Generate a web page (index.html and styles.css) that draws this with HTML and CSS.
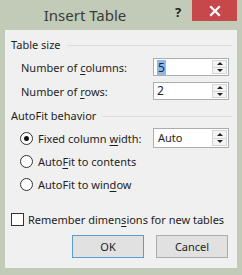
FILE: index.html
```html
<!DOCTYPE html>
<html>
<head>
<meta charset="utf-8">
<link rel="stylesheet" href="styles.css">
</head>
<body>
<div class="window">
  <div class="titlebar">
    <div class="title">Insert Table</div>
    <div class="help">?</div>
    <div class="close">
      <svg width="12" height="12" viewBox="0 0 12 12"><path d="M2 2 L10 10 M10 2 L2 10" stroke="#fff" stroke-width="2.2" stroke-linecap="square"/></svg>
    </div>
  </div>
  <div class="panel">
    <div class="group-head"><span>Table size</span><span class="rule"></span></div>
    <div class="field-row row1">
      <span class="label">Number of <u>c</u>olumns:</span>
      <div class="spin"><span class="val"><span class="sel">5</span></span><span class="arrows"><span class="up"></span><span class="dn"></span></span></div>
    </div>
    <div class="field-row row2">
      <span class="label">Number of <u>r</u>ows:</span>
      <div class="spin"><span class="val">2</span><span class="arrows"><span class="up"></span><span class="dn"></span></span></div>
    </div>
    <div class="group-head head2"><span>AutoFit behavior</span><span class="rule"></span></div>
    <div class="radio-row first">
      <span class="radio checked"></span>
      <span class="rlabel">Fixed column <u>w</u>idth:</span>
      <div class="spin auto"><span class="val">Auto</span><span class="arrows"><span class="up"></span><span class="dn"></span></span></div>
    </div>
    <div class="radio-row">
      <span class="radio"></span>
      <span class="rlabel">Auto<u>F</u>it to contents</span>
    </div>
    <div class="radio-row">
      <span class="radio"></span>
      <span class="rlabel">AutoFit to win<u>d</u>ow</span>
    </div>
    <div class="check-row">
      <span class="check"></span>
      <span class="clabel">Remember dimen<u>s</u>ions for new tables</span>
    </div>
    <div class="buttons">
      <div class="btn default">OK</div>
      <div class="btn">Cancel</div>
    </div>
  </div>
</div>
</body>
</html>
```
FILE: styles.css
```css
html, body { margin: 0; padding: 0; }
body {
  width: 242px;
  height: 275px;
  background: #c2cab8;
  font-family: "Noto Sans", "Open Sans", sans-serif;
  font-size: 11px;
  color: #1e1e1e;
  overflow: hidden;
  white-space: nowrap;
}
.window {
  width: 242px;
  height: 275px;
  display: flex;
  flex-direction: column;
}
.titlebar {
  height: 30px;
  display: flex;
  align-items: flex-start;
}
.title {
  width: 170px;
  text-align: center;
  font-size: 15px;
  line-height: 30px;
  color: #3a3a3a;
}
.help {
  width: 22px;
  text-align: left;
  font-size: 13px;
  font-weight: bold;
  line-height: 24px;
  color: #222;
  padding-left: 5px;
  box-sizing: border-box;
}
.close {
  width: 45px;
  height: 21px;
  background: #c7484a;
  display: flex;
  align-items: center;
  justify-content: center;
}
.close svg { display: block; }
.panel {
  margin: 0 5px;
  height: 238px;
  background: #f0f0f0;
  box-sizing: border-box;
  padding-top: 7px;
  display: flex;
  flex-direction: column;
}
.group-head {
  height: 16px;
  display: flex;
  align-items: center;
  padding-left: 6px;
  padding-right: 5px;
  line-height: 16px;
}
.group-head .rule {
  flex: 1;
  height: 1px;
  background: #dcdcdc;
  margin-left: 6px;
  margin-top: 1px;
}
.head2 { margin-top: 8px; }
.field-row {
  height: 18px;
  display: flex;
  align-items: center;
  padding-left: 16px;
}
.row1 { margin-top: 5px; }
.row2 { margin-top: 6px; }
.label { flex: 1; }
.spin {
  width: 76px;
  height: 18px;
  margin-right: 8px;
  box-sizing: border-box;
  border: 1px solid #abadb3;
  background: #fff;
  display: flex;
}
.spin .val {
  flex: 1;
  padding-left: 3px;
  line-height: 16px;
  display: flex;
  align-items: center;
  font-size: 12px;
}
.sel {
  background: #8fb8e6;
  color: #0b2a5a;
  padding: 0 1px;
  line-height: 15px;
}
.arrows {
  width: 15px;
  margin: 1px 1px 1px 0;
  box-sizing: border-box;
  border: 1px solid #d6d6d6;
  background: #f4f4f4;
  display: flex;
  flex-direction: column;
}
.arrows .up, .arrows .dn {
  flex: 1;
  display: flex;
  align-items: center;
  justify-content: center;
}
.arrows .up { border-bottom: 1px solid #d6d6d6; }
.arrows .up::before {
  content: "";
  border-left: 3px solid transparent;
  border-right: 3px solid transparent;
  border-bottom: 3px solid #222;
}
.arrows .dn::before {
  content: "";
  border-left: 3px solid transparent;
  border-right: 3px solid transparent;
  border-top: 3px solid #222;
}
.spin.auto { height: 20px; }
.spin.auto .val { line-height: 18px; padding-left: 4px; font-size: 11px; }
.radio-row {
  height: 20px;
  display: flex;
  align-items: center;
  padding-left: 15px;
  margin-top: 3px;
}
.radio-row.first { margin-top: 4px; }
.radio-row.first .rlabel { flex: 1; }
.radio {
  width: 13px;
  height: 13px;
  box-sizing: border-box;
  border: 1px solid #333;
  border-radius: 50%;
  background: #fff;
  margin-right: 5px;
  display: flex;
  align-items: center;
  justify-content: center;
}
.radio.checked::before {
  content: "";
  width: 5px;
  height: 5px;
  border-radius: 50%;
  background: #111;
}
.check-row {
  height: 20px;
  display: flex;
  align-items: center;
  padding-left: 6px;
  margin-top: 15px;
}
.check {
  width: 13px;
  height: 13px;
  box-sizing: border-box;
  border: 1px solid #333;
  background: #fff;
  margin-right: 4px;
}
.buttons {
  margin-top: 6px;
  display: flex;
  justify-content: flex-end;
  gap: 12px;
  padding-right: 9px;
}
.btn {
  width: 72px;
  height: 23px;
  box-sizing: border-box;
  border: 1px solid #adadad;
  background: #e1e1e1;
  text-align: center;
  line-height: 21px;
}
.btn.default { border-color: #5a9bd8; }
u { text-decoration: underline; text-underline-offset: 2px; }
```
